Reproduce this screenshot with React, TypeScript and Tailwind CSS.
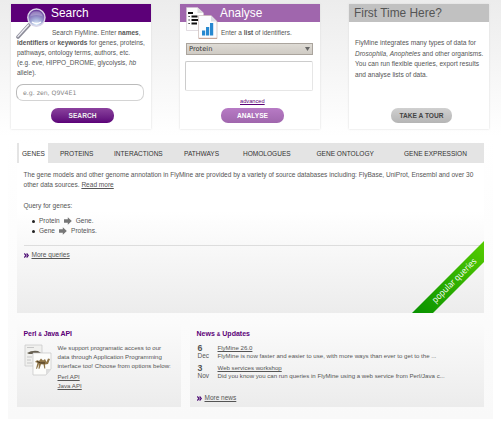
import React from "react";

const magnifier = (
  <svg className="absolute left-[5px] top-[3px] h-[33px] w-[32px]" viewBox="0 0 32 33">
    <defs>
      <radialGradient id="lens" cx=".5" cy=".9" r=".9">
        <stop offset="0" stopColor="#dff0fa" />
        <stop offset=".4" stopColor="#a0a6d4" />
        <stop offset="1" stopColor="#5f2c94" />
      </radialGradient>
    </defs>
    <path d="M2 30 13 18" stroke="#8c8c98" strokeWidth="3.6" strokeLinecap="round" />
    <path d="M2 29.4 12.4 18" stroke="#eeeef4" strokeWidth="1.4" strokeLinecap="round" />
    <circle cx="20.400" cy="10.600" r="8.600" fill="url(#lens)" stroke="#dcd8ea" strokeWidth="1.400" />
    <path d="M14 9.5a6.5 6.5 0 0 1 12.8 0q-6.300-3-12.800 0" fill="#fff" opacity=".25" />
    <path d="M16 15q4.500 3 9 0" stroke="#fff" strokeWidth="1.500" fill="none" />
  </svg>
);

const documents = (
  <svg className="absolute left-[5px] top-[2px] h-[34px] w-[34px]" viewBox="0 0 34 34">
    <path d="M1.500 1.500h11l6 5.500v17.500h-17z" fill="#fdfdfd" stroke="#cfc6cf" strokeWidth=".6" />
    <path d="M12.500 1.500v5.500h6" fill="#ddd" />
    <path d="M3 7h5M6.500 10.500h6M6.500 14h6.500M6.500 17.500h5.500" stroke="#111" strokeWidth="1.900" />
    <path d="M3.500 10.500h1.200M3.500 14h1.200M3.500 17.500h1.200" stroke="#111" strokeWidth="1.200" />
    <path d="M13.500 9.500h12.500l6 6v17h-18.500z" fill="#fcfcfe" stroke="#c9b9b4" strokeWidth=".7" />
    <path d="M26 9.500v6h6" fill="#dcdce4" />
    <path d="M17 24.500h3.200v5h-3.200zM21 21h3.200v8.500h-3.200zM25 17h3.200v12.500h-3.200z" fill="#2788d0" />
    <path d="M14 32.300h18" stroke="#b88a72" strokeWidth=".7" />
  </svg>
);

const perlDocs = (
  <svg className="h-[32px] w-[28px]" viewBox="0 0 28 32">
    <path d="M1 1h17v21h-17z" fill="#f0f0ee" stroke="#c5c5c5" strokeWidth=".7" />
    <path d="M3 3.500h7M3 13h5M3 16h4M3 19h5" stroke="#bbb" strokeWidth=".8" />
    <path d="M3 9q5-3 11-2l3 2-3 1h-9z" fill="#676052" />
    <path d="M9 9h18v16l-5 6h-13z" fill="#fcfcfa" stroke="#c4c4c4" strokeWidth=".7" />
    <path d="M22 31v-6h5" fill="#ddd" />
    <path d="M11 18q2-3 4-1l2-2.500 2 2 2-1.500 1.500 3 1.500-3.500 2 .5-2 5-3 .5.300 4h-1l-.8-4-2.500-.3-1.500 4.500h-1l.5-5-2 5h-1l1.500-6z" fill="#8e7446" />
    <path d="M13 17.500q3 2 8 1.500" stroke="#3f301d" strokeWidth=".9" fill="none" />
  </svg>
);

function Chevrons() {
  return (
    <svg className="h-[5px] w-[5px]" viewBox="0 0 5 5" fill="none" stroke="#4b0a72" strokeWidth="1.200">
      <path d="m.3.500 1.700 2-1.700 2M2.600.500l1.700 2-1.700 2" />
    </svg>
  );
}

function Arrow() {
  return (
    <svg className="h-[8px] w-[8px]" viewBox="0 0 8 8">
      <path d="M0 2.300h3.800v-2l4 3.700-4 3.700v-2h-3.800z" fill="#777" />
    </svg>
  );
}

function Card({ title, head, children }: { title: string; head: string; children: React.ReactNode }) {
  return (
    <section className="relative h-[125px] w-[140px] bg-white shadow-[0_0_2px_#d8d8d8]">
      <h2 className={`h-[18px] whitespace-nowrap leading-[19px] ${head}`}>{title}</h2>
      {children}
    </section>
  );
}

function Pill({ label, tone }: { label: string; tone: string }) {
  return (
    <button className={`block h-[15px] rounded-[7px] text-[6.600px] font-bold leading-[16px] ${tone}`}>{label}</button>
  );
}

const tabs = [
  { name: "GENES", place: "ml-[2px] w-[29px] bg-white pl-[3px]" },
  { name: "PROTEINS", place: "ml-[12px] w-[54px]" },
  { name: "INTERACTIONS", place: "w-[70px]" },
  { name: "PATHWAYS", place: "w-[59px]" },
  { name: "HOMOLOGUES", place: "w-[73.500px]" },
  { name: "GENE ONTOLOGY", place: "w-[87.500px]" },
  { name: "GENE EXPRESSION", place: "w-[70px]" },
];

const news = [
  { day: "6", month: "Dec", title: "FlyMine 26.0", text: "FlyMine is now faster and easier to use, with more ways than ever to get to the ..." },
  { day: "3", month: "Nov", title: "Web services workshop", text: "Did you know you can run queries in FlyMine using a web service from Perl/Java c..." },
];

export default function App() {
  return (
    <main className="h-[427px] w-[501px] overflow-hidden bg-white font-['Liberation_Sans',Arial,sans-serif] text-[6.500px] text-[#555]">
      <div className="flex h-[136px] gap-[29px] bg-linear-to-b from-[#ececec] to-white pl-[11px] pt-[4px]">
        <Card title="Search" head="bg-[#5c0078] pl-[40px] text-[11.900px] text-white">
          {magnifier}
          <div className="whitespace-nowrap pl-[6px] pt-[6px] leading-[10px]">
            <p className="pl-[35px]">Search FlyMine. Enter <b>names</b>,</p>
            <p><b>identifiers</b> or <b>keywords</b> for genes, proteins,</p>
            <p>pathways, ontology terms, authors, etc.</p>
            <p>(e.g. <i>eve</i>, HIPPO_DROME, glycolysis, <i>hb</i></p>
            <p>allele).</p>
          </div>
          <div className="ml-[5px] mt-[6px] h-[17px] w-[128px] rounded-[7px] border border-[#d4d4d4] border-l-[#bbb] border-t-[#bbb] bg-white pl-[6px] font-['DejaVu_Sans',sans-serif] text-[6.200px] leading-[15px] text-[#888]">e.g. zen, Q9V4E1</div>
          <div className="ml-[40px] mt-[7px]"><Pill label="SEARCH" tone="w-[63px] bg-linear-to-b from-[#8b419e] to-[#5c0078] text-[#eee]" /></div>
        </Card>
        <Card title="Analyse" head="bg-[#a066ad] pl-[40px] text-[11.900px] text-white">
          {documents}
          <p className="whitespace-nowrap pl-[41px] pt-[6px] leading-[10px]">Enter a <b>list</b> of identifiers.</p>
          <div className="ml-[6px] mt-[5px] flex h-[12px] w-[127px] items-center justify-between border border-[#aaa49d] bg-linear-to-b from-[#dedbd5] to-[#cfcbc4] pl-[2px] pr-[2px] font-['DejaVu_Sans',sans-serif] text-[6.700px] text-[#333]">
            <span>Protein</span>
            <svg className="h-[4px] w-[5px]" viewBox="0 0 5 4"><path d="M0 0h5l-2.500 4z" fill="#666" /></svg>
          </div>
          <div className="ml-[5px] mt-[6px] h-[30px] w-[128px] rounded-[2px] border border-[#e6e6e6] border-l-[#ccc] border-t-[#ccc] bg-white" />
          <p className="mt-[6px] pl-[60px] text-[5.700px] leading-[8px] text-[#5c0078] underline">advanced</p>
          <div className="ml-[41px] mt-[3px]"><Pill label="ANALYSE" tone="w-[63px] bg-linear-to-b from-[#b77bc5] to-[#a066ad] text-white" /></div>
        </Card>
        <Card title="First Time Here?" head="bg-[#c1c1c1] pl-[5px] text-[11.900px] text-[#555]">
          <div className="h-[86px] whitespace-nowrap pl-[6px] pt-[16px] leading-[10.500px]">
            <p className="text-[6.600px]">FlyMine integrates many types of data for</p>
            <p><i>Drosophila</i>, <i>Anopheles</i> and other organisms.</p>
            <p className="text-[6.600px]">You can run flexible queries, export results</p>
            <p className="text-[6.600px]">and analyse lists of data.</p>
          </div>
          <div className="ml-[42px]"><Pill label="TAKE A TOUR" tone="w-[61px] bg-linear-to-b from-[#d0d0d0] to-[#b5b5b5] text-[#444]" /></div>
        </Card>
      </div>

      <div className="ml-[8px] h-[283px] w-[485px] bg-linear-to-b from-white to-[#f9f9f9] pl-[9px] pt-[7px]">
        <section className="relative h-[170px] w-[467px] overflow-hidden bg-linear-to-b from-white from-40% to-[#ececec]">
          <nav className="flex h-[20px] bg-[#e4e4e4] text-[6.550px] leading-[21px] text-[#333]">
            {tabs.map((t) => <a key={t.name} className={`shrink-0 whitespace-nowrap ${t.place}`}>{t.name}</a>)}
          </nav>
          <div className="whitespace-nowrap pl-[6.500px] pt-[7px] text-[6.550px] leading-[10px]">
            <p>The gene models and other genome annotation in FlyMine are provided by a variety of source databases including: FlyBase, UniProt, Ensembl and over 30</p>
            <p>other data sources. <a className="underline">Read more</a></p>
            <p className="mt-[11px]">Query for genes:</p>
            <ul className="mt-[5px] pl-[8px]">
              {[["Protein", "Gene."], ["Gene", "Proteins."]].map(([from, to]) => (
                <li key={from} className="flex h-[10px] items-center">
                  <span className="mr-[4.500px] size-[3px] rounded-full bg-[#222]" />
                  <span>{from}</span>
                  <span className="mx-[4px]"><Arrow /></span>
                  <span>{to}</span>
                </li>
              ))}
            </ul>
            <div className="mt-[9px] flex w-[460px] items-center gap-[3px] border-t border-[#ddd] pt-[4px]"><Chevrons /><a className="underline">More queries</a></div>
          </div>
          <svg className="absolute bottom-0 right-0 h-[73px] w-[73px]" viewBox="0 0 73 73">
            <defs><linearGradient id="ribbon" x1="0" y1="1" x2="1" y2="0"><stop stopColor="#079100" /><stop offset="1" stopColor="#55cc00" /></linearGradient></defs>
            <path d="M1 73 73 1v21L22 73z" fill="url(#ribbon)" />
            <text x="24.500" y="63.500" transform="rotate(-45 24.500 63.500)" fill="white" fontFamily="Open Sans, sans-serif" fontSize="9" textLength="59" lengthAdjust="spacingAndGlyphs">popular queries</text>
          </svg>
        </section>

        <div className="mt-[10px] flex gap-[9px]">
          <section className="h-[84px] w-[164px] bg-linear-to-b from-[#fbfbfb] to-[#ececec] pl-[6.500px] pt-[6px]">
            <h3 className="text-[7px] font-bold leading-[10px] tracking-[-.080px] text-[#5c0078]">Perl <span className="text-[5px]">&amp;</span> Java API</h3>
            <div className="mt-[4px] flex gap-[6px] whitespace-nowrap text-[6.150px] leading-[9px]">
              <div className="mt-[1px]">{perlDocs}</div>
              <div>
                <p>We support programatic access to our</p>
                <p>data through Application Programming</p>
                <p>interface too! Choose from options below:</p>
                <p className="mt-[2px]"><a className="underline">Perl API</a></p>
                <p><a className="underline">Java API</a></p>
              </div>
            </div>
          </section>
          <section className="h-[84px] w-[294px] bg-linear-to-b from-[#fbfbfb] to-[#ececec] pl-[6.500px] pt-[6px]">
            <h3 className="mb-[5px] text-[7px] font-bold leading-[10px] text-[#5c0078]">News <span className="text-[5px]">&amp;</span> Updates</h3>
            {news.map((n) => (
              <div key={n.day} className="flex h-[20px] whitespace-nowrap text-[6.100px] leading-[8px]">
                <div className="w-[21px] pl-[1px]"><b className="block text-[8.800px] leading-[9px]">{n.day}</b><p className="text-[6.500px] leading-[6px]">{n.month}</p></div>
                <div><p><a className="underline">{n.title}</a></p><p>{n.text}</p></div>
              </div>
            ))}
            <div className="mt-[9px] flex items-center gap-[3px] leading-[10px]"><Chevrons /><a className="underline">More news</a></div>
          </section>
        </div>
      </div>
    </main>
  );
}
